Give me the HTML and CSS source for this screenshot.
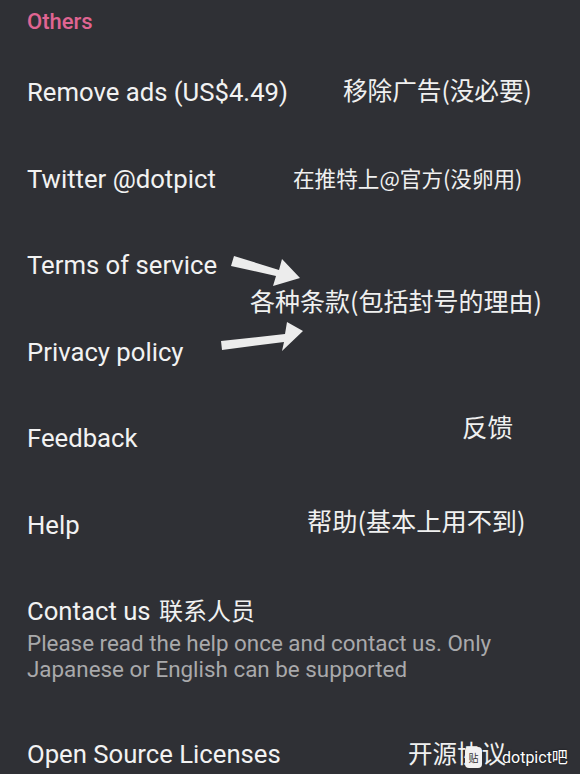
FILE: index.html
```html
<!DOCTYPE html>
<html lang="zh-CN">
<head>
    <meta charset="UTF-8">
    <meta name="viewport" content="width=device-width, initial-scale=1.0">
    <title>Others</title>
    <link rel="stylesheet" href="styles.css">
</head>
<body>

<div class="screen">
    <div class="section-title">Others</div>

    <div class="row">
        <span class="label">Remove ads (US$4.49)</span>
        <span class="note note-ads">移除广告(没必要)</span>
    </div>
    <div class="row">
        <span class="label">Twitter @dotpict</span>
        <span class="note note-twitter">在推特上@官方(没卵用)</span>
    </div>
    <div class="row">
        <span class="label">Terms of service</span>
    </div>
    <div class="row">
        <span class="label">Privacy policy</span>
    </div>
    <div class="row">
        <span class="label">Feedback</span>
        <span class="note note-feedback">反馈</span>
    </div>
    <div class="row">
        <span class="label">Help</span>
        <span class="note note-help">帮助(基本上用不到)</span>
    </div>
    <div class="row row-sub">
        <div class="label">Contact us <span class="note-inline">联系人员</span></div>
        <div class="sub">Please read the help once and contact us. Only Japanese or English can be supported</div>
    </div>
    <div class="row">
        <span class="label">Open Source Licenses</span>
        <span class="note note-oss">开源协议</span>
        <span class="watermark"><span class="wm-icon">贴</span>dotpict吧</span>
    </div>

    <!-- 箭头和条款说明 -->
    <span class="note note-terms">各种条款(包括封号的理由)</span>
    <svg class="arrows" width="580" height="774" viewBox="0 0 580 774">
        <path d="M234 256 L279 270 L282 259 L300 278 L273 286 L276 276 L231 266 Z" fill="#ececec"/>
        <path d="M221 341 L285 334 L287 322 L303 331 L282 351 L284 342 L222 350 Z" fill="#ececec"/>
    </svg>
</div>

</body>
</html>
```

FILE: styles.css
```css
body {
    margin: 0;
    background-color: #2f3035;
    font-family: 'Roboto', 'Noto Sans CJK SC', sans-serif;
}

.screen {
    position: relative;
    width: 580px;
    height: 774px;
    overflow: hidden;
    background-color: #2f3035;
}

.section-title {
    height: 49px;
    padding-left: 27px;
    box-sizing: border-box;
    padding-top: 9px;
    font-size: 22px;
    line-height: 26px;
    font-weight: 500;
    color: #e06592;
}

.row {
    position: relative;
    height: 86.5px;
    padding-left: 27px;
    display: flex;
    align-items: center;
}

.label {
    font-size: 25.7px;
    line-height: 28px;
    color: #f2f2f2;
}

.row-sub {
    height: auto;
    display: block;
    padding-top: 28px;
    padding-bottom: 29px;
}

.sub {
    margin-top: 5px;
    width: 500px;
    font-size: 22.4px;
    line-height: 26px;
    color: #a9a9ab;
}

.note, .note-inline {
    font-family: 'Noto Sans CJK SC', sans-serif;
    color: #f0f0f0;
    white-space: nowrap;
}

.note-inline {
    font-size: 24px;
    margin-left: 2px;
}

.note {
    position: absolute;
    line-height: 30px;
}

.note-ads {
    left: 343px;
    top: 25px;
    font-size: 24.6px;
}

.note-twitter {
    left: 293px;
    top: 27px;
    font-size: 21.6px;
}

.note-terms {
    left: 250px;
    top: 285px;
    font-size: 25px;
}

.note-feedback {
    left: 462px;
    top: 16px;
    font-size: 25.5px;
}

.note-help {
    left: 307px;
    top: 23px;
    font-size: 25.2px;
}

.note-oss {
    left: 408px;
    top: 27px;
    font-size: 24.5px;
}

.watermark {
    position: absolute;
    left: 465px;
    top: 36px;
    display: flex;
    align-items: center;
    font-family: 'Roboto', 'Noto Sans CJK SC', sans-serif;
    font-size: 16px;
    line-height: 20px;
    color: #ffffff;
    text-shadow: 0 0 2px rgba(0, 0, 0, 0.7);
}

.wm-icon {
    width: 17px;
    height: 21px;
    margin-right: 20px;
    border-radius: 4px;
    background-color: #f2f2f2;
    color: #333;
    font-family: 'Noto Sans CJK SC', sans-serif;
    font-size: 10px;
    line-height: 21px;
    text-align: center;
    text-shadow: none;
}

.arrows {
    position: absolute;
    left: 0;
    top: 0;
}
```
